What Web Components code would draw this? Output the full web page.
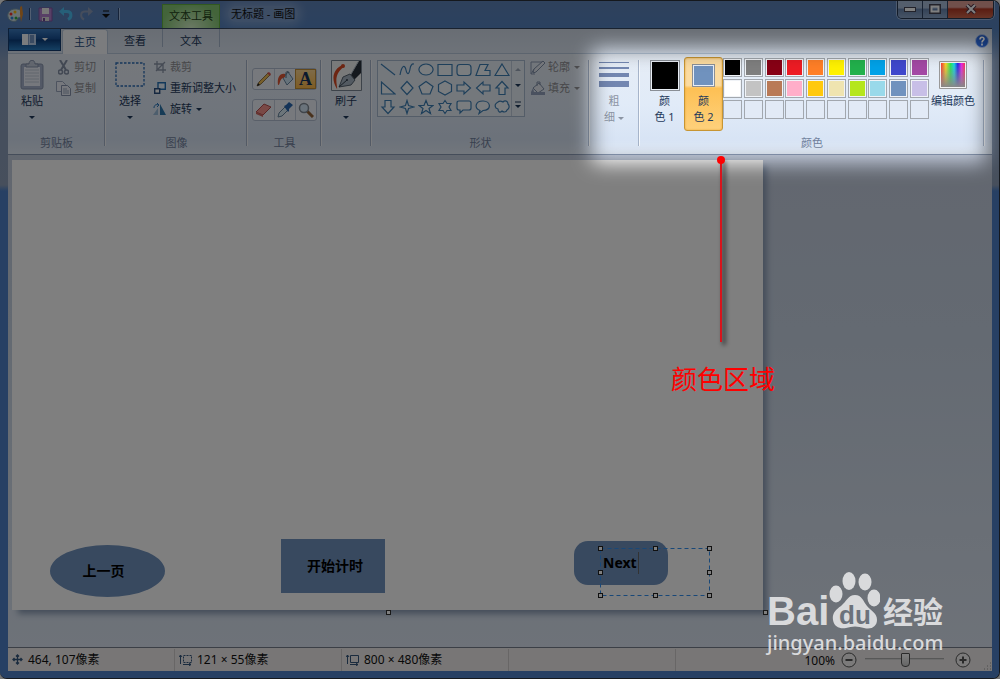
<!DOCTYPE html>
<html lang="zh-CN">
<head>
<meta charset="utf-8">
<meta name="viewport" content="width=device-width, initial-scale=1">
<title>无标题 - 画图</title>
<style>
html, body { margin: 0; background: #777; }
body { font: 11px/16px "Noto Sans", "Noto Sans CJK SC", sans-serif; color: #1e395b; }
</style>
</head>
<body>
<paint-app></paint-app>
<script>
const RESET = `
  *, *::before, *::after { box-sizing: border-box; }
  button, input { font: inherit; color: inherit; margin: 0; padding: 0; border: 0; background: none; }
  button { display: inline-flex; align-items: center; justify-content: center; }
`;
function define(name, css, html) {
  const t = document.createElement('template');
  customElements.define(name, class extends HTMLElement {
    connectedCallback() {
      if (this.shadowRoot) return;
      const root = this.attachShadow({ mode: 'open' });
      t.innerHTML = `<style>${RESET}${css}</style>${typeof html === 'function' ? html(this) : html}`;
      root.append(t.content.cloneNode(true));
    }
  });
}

/* Each icon: [width, height, svg body] */
const ICONS = {
  palette: [17, 17, `<path d="M8 3C3 3 0 7 1 11s5 5 8 4c2-1 1-2 2-3s4 0 4-4-3-5-7-5z" fill="#d4e3e6" stroke="#7c9aa8"/><circle cx="4" cy="8" r="1.5" fill="#e33"/><circle cx="8" cy="6" r="1.5" fill="#fb1"/><circle cx="5" cy="12" r="1.5" fill="#38d"/><circle cx="9" cy="12" r="1.5" fill="#3a4"/><path d="M13 1l2-1 1 8-2 8-1-8z" fill="#e08b2e"/>`],
  save: [15, 15, `<path d="M1 1h13v13H2l-1-1z" fill="#b07fcd" stroke="#7f55a0"/><path d="M4 1h7v6H4z" fill="#eee"/><path d="M4 10h7v4H4z" fill="#ddd"/><path d="M5 11h2v3H5z" fill="#714692"/>`],
  undo: [14, 14, `<path d="M3 4.500h5c5 0 5 6 1 8" fill="none" stroke="#4cc0f2" stroke-width="3"/><path d="M0 4.500L5 0v9z" fill="#4cc0f2"/>`],
  redo: [14, 14, `<path d="M11 4.500H6c-5 0-5 6-1 8" fill="none" stroke="#8a9ab8" stroke-width="2"/><path d="M14 4.500L9 0v9z" fill="#8a9ab8"/>`],
  qat: [8, 8, `<path d="M1 1h6" stroke="#111"/><path d="M0 4h8L4 8z" fill="#111"/>`],
  down: [6, 3, `<path d="M0 0h6L3 3z" fill="currentColor"/>`],
  up: [6, 3, `<path d="M0 3h6L3 0z" fill="currentColor"/>`],
  more: [8, 8, `<path d="M1 1h6" stroke="currentColor"/><path d="M1 4h6L4 7z" fill="currentColor"/>`],
  min: [12, 5, `<rect x=".5" y=".5" width="11" height="4" fill="#fff" stroke="#445"/>`],
  max: [12, 10, `<path d="M1 1h10v8H1z" fill="none" stroke="#445" stroke-width="2"/><path d="M2.500 2.500h7v5h-7z" fill="none" stroke="#fff" stroke-width="2"/>`],
  close: [12, 10, `<path d="M2 1l8 8M10 1L2 9" stroke="#534" stroke-width="4"/><path d="M2 1l8 8M10 1L2 9" stroke="#fff" stroke-width="2"/>`],
  help: [14, 14, `<circle cx="7" cy="7" r="6.500" fill="#2862ce" stroke="#a7bde6"/><path d="M5 5.500c0-3 4-3 4-.5C9 6.500 7 6.500 7 8.500M7 9.500v2" stroke="#fff" stroke-width="1.600" fill="none"/>`],
  menu: [14, 11, `<path d="M0 0h14v11H0z" fill="#f5f8fc"/><path d="M7 0h7v11H7z" fill="#bcd2ef"/><path d="M8 2h4M8 4h4M8 6h4M8 8h4" stroke="#285898"/><path d="M6.500 0v11" stroke="#8ba5cb"/>`],
  paste: [24, 30, `<rect x="1" y="4" width="22" height="25" rx="2" fill="#a6b3cc" stroke="#8793ad"/><path d="M4 7h16v19H4z" fill="#edf1fa"/><path d="M5 10h14M5 13h14M5 16h14M5 19h14M5 22h14" stroke="#c2cbdc"/><path d="M6 7V4h3c0-5 6-5 6 0h3v3z" fill="#c4cddd" stroke="#8793ad"/>`],
  cut: [11, 15, `<path d="M2 0l6 10M9 0L3 10" stroke="#8490a6" stroke-width="2" fill="none"/><circle cx="2.500" cy="12" r="2" fill="none" stroke="#8490a6" stroke-width="1.500"/><circle cx="8.500" cy="12" r="2" fill="none" stroke="#8490a6" stroke-width="1.500"/>`],
  copy: [15, 15, `<path d="M.5.5h6l3 3v7h-9z" fill="#edf1fa" stroke="#9aa7bf"/><path d="M5.500 4.500h6l3 3v7h-9z" fill="#edf1fa" stroke="#8793ad"/><path d="M7 8h4M7 10h6M7 12h6" stroke="#9aa7bf"/>`],
  select: [30, 26, `<rect x="1" y="1" width="28" height="23" fill="#fff" fill-opacity=".2" stroke="#2b6cb5" stroke-width="1.300" stroke-dasharray="2.500 1.500"/>`],
  crop: [12, 12, `<path d="M3 0v9h9M0 3h9v9M2 10l9-9" stroke="#8c97aa" stroke-width="1.300" fill="none"/>`],
  resize: [12, 12, `<path d="M4 .7h7.300v6.600H4z" fill="#eaf4ff" stroke="#2470b5" stroke-width="1.400"/><path d="M.7 6.700h5v4.600h-5z" fill="#fff" stroke="#2a4f80" stroke-width="1.400"/>`],
  rotate: [14, 13, `<path d="M0 12l5-7v7z" fill="#9bbddb"/><path d="M7 12V1l6 11z" fill="#2c77ad"/><path d="M1 5c0-3 2-4 5-3M4 0l2 2-2 2" stroke="#2875bb" fill="none"/>`],
  pencil: [16, 16, `<path d="M1 15l2-4 9-9 2 2-9 9z" fill="#efbc55" stroke="#8f764a"/><path d="M11 2l3 3 1-2-2-2z" fill="#db554c"/><path d="M1 15l1-3 2 2z" fill="#222"/>`],
  bucket: [17, 16, `<path d="M6 7l5-6 5 7-6 6z" fill="#cde4f4" stroke="#6785a1"/><path d="M9 7V2c0-2 3-2 3 0" fill="none" stroke="#596d82"/><path d="M8 3C3 2 0 6 1 14c3 0 0-6 7-8z" fill="#e15836"/>`],
  eraser: [17, 14, `<path d="M1 9l8-8 7 3-8 8z" fill="#f4938c" stroke="#b54f4f"/><path d="M1 9l7 3v2l-7-3z" fill="#ce6763"/>`],
  picker: [16, 16, `<path d="M1 15l1-4 6-6 3 3-6 6z" fill="#d9eaf4" stroke="#66839c"/><path d="M7 4l2-1 3-3 4 3-4 4v2l-1 1z" fill="#2867b0"/>`],
  zoom: [16, 16, `<path d="M9 9l6 6" stroke="#93643a" stroke-width="3"/><circle cx="6" cy="6" r="4.500" fill="#d4e7f6" stroke="#818a96" stroke-width="1.500"/>`],
  brush: [31, 31, `<path d="M.5.5h30v30H.5z" fill="#f2f4f5" stroke="#7b8794"/><path d="M12 5C3 8-1 18 6 29c1-3-5-14 7-22z" fill="#da4b25"/><circle cx="12" cy="6" r="2" fill="#da4b25"/><path d="M19 16L28 1h2v12l-7 7z" fill="#2b333c"/><path d="M27 2l-8 14" stroke="#adb8c3"/><path d="M8 27l4-10 7-3 5 6-4 5z" fill="#a7b5c2" stroke="#566370"/><path d="M8 27l8-7" stroke="#33404d"/><circle cx="16" cy="20" r="1" fill="#33404d"/>`],
  outline: [16, 15, `<path d="M1 2h11M1 2v12h4M1 14l3-5" stroke="#8b99b2" fill="none"/><path d="M3 13l1-4 9-8 2 2-9 9z" fill="#e8edf5" stroke="#8190a9"/>`],
  fill: [16, 15, `<path d="M3 7l6-5 5 6-6 4z" fill="#e8edf5" stroke="#8190a9"/><path d="M7 5V1h3v3" fill="none" stroke="#8190a9"/><path d="M1 11h14v3H1zM3 7l-2 4h3z" fill="#95a3bf"/>`],
  lines: [30, 28, `<path d="M0 1.500h30" stroke="#7387b1"/><path d="M0 7h30" stroke="#7387b1" stroke-width="2"/><path d="M0 14h30" stroke="#7387b1" stroke-width="4"/><path d="M0 23h30" stroke="#7387b1" stroke-width="6"/>`],
  move: [11, 11, `<path d="M5.500 1v9M1 5.500h9M4 2.500L5.500 1 7 2.500M4 8.500L5.500 10 7 8.500M2.500 4L1 5.500 2.500 7M8.500 4L10 5.500 8.500 7" stroke="#34567d" stroke-width="1.300" fill="none"/>`],
  selsize: [13, 12, `<path d="M4.500 1.500h8v7h-8z" fill="none" stroke="#34567d" stroke-dasharray="2 1"/><path d="M1.500 10V1M0 3l1.500-2L3 3M4 10.500h8M10 9l2 1.500-2 1.500" fill="none" stroke="#34567d"/>`],
  imgsize: [13, 12, `<path d="M4.500 1.500h8v7h-8z" fill="none" stroke="#34567d"/><path d="M1.500 10V1M0 3l1.500-2L3 3M4 10.500h8M10 9l2 1.500-2 1.500" fill="none" stroke="#34567d"/>`],
  minus: [16, 16, `<circle cx="8" cy="8" r="7" fill="#f6f5f5" stroke="#555"/><path d="M4.500 8h7" stroke="#555" stroke-width="2"/>`],
  plus: [16, 16, `<circle cx="8" cy="8" r="7" fill="#f6f5f5" stroke="#555"/><path d="M4.500 8h7M8 4.500v7" stroke="#555" stroke-width="2"/>`],
  grip: [9, 9, `<path d="M7 1h1M4 4h1M7 4h1M1 7h1M4 7h1M7 7h1" stroke="#999"/>`]
};
const SHAPES = [
  'M1 2l14 11', 'M1 13C3 2 6 3 7 8s3 5 4-1 3-5 4-5', 'M8 2a7 5.500 0 1 0 .01 0z', 'M1 2.500h14v11H1z', 'M4 2.500h8q3 0 3 3v5q0 3-3 3H4q-3 0-3-3v-5q0-3 3-3z', 'M5 2.500h8l-3 6h5v5H1z', 'M8 2l7 11.500H1z',
  'M1.500 2v12H15z', 'M8 1.500l6 6.500-6 6.500L2 8z', 'M8 1.500l7 5-3 7.500H4L1 6.500z', 'M8 1l6.500 3.500v7L8 15l-6.500-3.500v-7z', 'M1 5h7V2l6.500 6L8 14v-3H1z', 'M15 5H8V2L1.500 8 8 14v-3h7z', 'M5 14.500V8H2l6-6.500L14 8h-3v6.500z',
  'M5 1.500V8H2l6 6.500L14 8h-3V1.500z', 'M8 1.500l1.500 5L14.500 8l-5 1.500L8 14.500l-1.500-5L1.500 8l5-1.500z', 'M8 1.500l2 5h5l-4 3 1.500 5L8 11.500 3.500 14.500 5 9.500l-4-3h5z', 'M8 1.500l2 3h4l-2 3.500 2 3.500h-4l-2 3-2-3H2L4 8 2 4.500h4z', 'M3 2h10q2 0 2 2v5q0 2-2 2H7l-3 3v-3H3q-2 0-2-2V4q0-2 2-2z', 'M5 11.500C-1 9 0 2 8 2s9 9 0 9.500L4 14.500z', 'M4 3c2-2 3-1 5 0 2-2 5-1 5 2 2 2 1 5-1 6-1 3-4 2-5 1-2 2-4 1-4-2l-2-1c-2-3 0-5 2-6z'
];
ICONS.rainbow = [28, 28, `<defs><linearGradient id="h"><stop offset="0" stop-color="#f33"/><stop offset=".2" stop-color="#fd2"/><stop offset=".4" stop-color="#2e5"/><stop offset=".55" stop-color="#1de"/><stop offset=".7" stop-color="#22e"/><stop offset=".85" stop-color="#e2e"/><stop offset="1" stop-color="#f35"/></linearGradient><linearGradient id="v" x2="0" y2="1"><stop offset="0" stop-color="#888" stop-opacity="0"/><stop offset="1" stop-color="#888"/></linearGradient></defs><path d="M.5.5h27v27H.5z" fill="#f5f5f5" stroke="#999"/><path d="M2 2h24v24H2z" fill="url(#h)"/><path d="M2 2h24v24H2z" fill="url(#v)"/>`];

define('ui-icon', `:host { display: inline-flex; flex: none; } svg { display: block; }`, el => {
  const n = el.getAttribute('name');
  const [w, h, body] = ICONS[n];
  return `<svg width="${w}" height="${h}" viewBox="0 0 ${w} ${h}" aria-hidden="true">${body}</svg>`;
});

define('title-bar', `
  :host { display: flex; height: 28px; position: relative; align-items: center; color: #111; }
  .quick { display: flex; align-items: center; gap: 5px; width: 155px; margin-left: -1px; }
  .quick button { width: 15px; height: 16px; }
  .quick button:first-of-type { margin-left: 3px; }
  i { width: 1px; height: 12px; background: #2c4772; box-shadow: 1px 0 #a5bfe5; }
  .context { width: 58px; align-self: stretch; margin-top: 4px; display: grid; place-items: center; padding-bottom: 2px; background: radial-gradient(ellipse at 50% 100%, #d5f2c8, #86c875 75%); border: 1px solid #65b341; border-bottom: 0; color: #24421a; }
  h1 { font-size: 11px; line-height: 16px; font-weight: 400; margin: 0 auto 0 8px; padding: 0 3px; border-radius: 8px; background: #fff3; box-shadow: 0 0 8px 4px #fff3; }
  .win { display: flex; align-self: flex-start; height: 19px; margin-right: -2px; border: 1px solid #263852; border-top: 0; border-radius: 0 0 5px 5px; overflow: hidden; box-shadow: 0 0 0 1px #9ab5dd; }
  .win button { width: 25px; background: linear-gradient(#a8bcd8 45%, #6884ae 50%, #8ea8cc); border-right: 1px solid #304565; }
  .win button:last-child { width: 45px; border: 0; background: linear-gradient(#e2a097 40%, #b43a25 50%, #d0694e); }
`, `
  <div class="quick"><ui-icon name="palette"></ui-icon><i></i>
    <button aria-label="保存"><ui-icon name="save"></ui-icon></button>
    <button aria-label="撤消"><ui-icon name="undo"></ui-icon></button>
    <button aria-label="重做"><ui-icon name="redo"></ui-icon></button>
    <button aria-label="自定义快速访问工具栏"><ui-icon name="qat"></ui-icon></button><i></i></div>
  <div class="context">文本工具</div>
  <h1>无标题 - 画图</h1>
  <div class="win"><button aria-label="最小化"><ui-icon name="min"></ui-icon></button><button aria-label="最大化"><ui-icon name="max"></ui-icon></button><button aria-label="关闭"><ui-icon name="close"></ui-icon></button></div>
`);

define('tab-strip', `
  :host { display: flex; box-sizing: border-box; height: 26px; background: linear-gradient(#d2dbe8, #dce6f3); border-top: 1px solid #35455f; border-bottom: 1px solid #b8c8dc; padding-right: 1px; }
  button { height: 24px; }
  .app { width: 53px; height: 22px; gap: 6px; color: #fff; background: linear-gradient(#3c7cc2, #164e93 48%, #0b3d7c 52%, #2a7fc5); border: 1px solid #153d70; border-top: 0; }
  .tab { width: 46px; }
  .on { background: #f7f9fd; border: 1px solid #b8c8dc; border-bottom: 0; border-radius: 3px 3px 0 0; margin: 0 4px 0 1px; height: 25px; color: #1e4a80; }
  .ctx { width: 58px; margin-left: 4px; height: 18px; padding-top: 6px; border: 1px solid #a7b6cc; border-width: 0 1px; }
  .help { margin-left: auto; width: 18px; }
`, `
  <button class="app" aria-label="画图菜单"><ui-icon name="menu"></ui-icon><ui-icon name="down"></ui-icon></button>
  <button class="tab on">主页</button><button class="tab">查看</button><button class="tab ctx">文本</button>
  <button class="help" aria-label="帮助"><ui-icon name="help"></ui-icon></button>
`);

define('ribbon-group', `
  :host { display: flex; flex-direction: column; position: relative; flex: none; }
  :host::after { content: ""; position: absolute; right: 0; top: 6px; bottom: 8px; width: 2px; background: linear-gradient(90deg, #a6b4ca 50%, #f6f9fd 50%); }
  .body { display: flex; height: 79px; padding-top: 3px; align-items: flex-start; }
  .label { height: 22px; line-height: 22px; text-align: center; color: #71819d; padding-right: 1px; }
`, el => `<div class="body"><slot></slot></div><div class="label">${el.getAttribute('label') || ''}</div>`);

define('big-button', `
  :host { display: block; flex: none; }
  button { width: 100%; flex-direction: column; justify-content: flex-start; height: 74px; padding-top: 1px; border: 1px solid transparent; border-radius: 3px; text-align: center; }
  .icon { height: 32px; display: grid; place-items: center; }
  .text { margin-top: 2px; white-space: nowrap; }
  ui-icon[name=down] { margin-top: 7px; }
  :host([disabled]) { color: #8b94a3; }
  :host([selected]) button { border-color: #c79533; background: linear-gradient(#fbdba0 38%, #fdc054 42%, #fed17c); box-shadow: inset 0 0 2px #e3a02f; }
`, el => `<button ${el.hasAttribute('disabled') ? 'disabled' : ''}><span class="icon"><slot name="icon"></slot></span><span class="text"><slot></slot></span>${el.hasAttribute('menu') ? '<ui-icon name="down"></ui-icon>' : ''}</button>`);

define('small-button', `
  :host { display: block; height: 20px; }
  button { height: 20px; gap: 3px; white-space: nowrap; }
  .icon { width: 15px; display: grid; place-items: center; }
  :host([disabled]) { color: #8f8f93; }
  ui-icon[name=down] { margin-left: 1px; }
`, el => `<button ${el.hasAttribute('disabled') ? 'disabled' : ''}><span class="icon"><ui-icon name="${el.getAttribute('icon')}"></ui-icon></span><slot></slot>${el.hasAttribute('menu') ? '<ui-icon name="down"></ui-icon>' : ''}</button>`);

define('tool-box', `
  :host { display: grid; gap: 9px; margin: 11px 0 0 4px; }
  div { display: flex; border: 1px solid #b3bfd2; border-radius: 3px; background: #eef3fa; }
  button { width: 21px; height: 20px; border-left: 1px solid #c3cddc; }
  button:first-child { border-left: 0; }
  .on { border: 1px solid #c59036; background: linear-gradient(#fcd690, #fdb94a); font: bold 18px/18px "Liberation Serif", serif; color: #15325c; }
`, `
  <div><button aria-label="铅笔"><ui-icon name="pencil"></ui-icon></button><button aria-label="填充"><ui-icon name="bucket"></ui-icon></button><button class="on">A</button></div>
  <div><button aria-label="橡皮擦"><ui-icon name="eraser"></ui-icon></button><button aria-label="取色器"><ui-icon name="picker"></ui-icon></button><button aria-label="放大镜"><ui-icon name="zoom"></ui-icon></button></div>
`);

define('shape-gallery', `
  :host { display: flex; box-sizing: border-box; width: 148px; height: 57px; margin: 3px 0 0 5px; border: 1px solid #a9bad0; background: #e9f0f9; }
  .grid { flex: 1; display: grid; grid-template: repeat(3, 1fr) / repeat(7, 1fr); }
  svg { fill: #f5faff; stroke: #3d7fb5; stroke-width: 1.200; }
  .bar { width: 13px; display: grid; border-left: 1px solid #c0ccdd; }
  .bar button:first-child { color: #9da9ba; }
`, `<div class="grid">${SHAPES.map((d, i) => `<button aria-label="形状 ${i + 1}"><svg width="16" height="16" viewBox="0 0 16 16"><path d="${d}" ${i < 2 ? 'fill="none"' : ''}/></svg></button>`).join('')}</div>
  <div class="bar"><button aria-label="上一行"><ui-icon name="up"></ui-icon></button><button aria-label="下一行"><ui-icon name="down"></ui-icon></button><button aria-label="更多形状"><ui-icon name="more"></ui-icon></button></div>`);

define('color-chip', `
  :host { display: block; box-sizing: border-box; width: 30px; height: 31px; padding: 1px; border: 1px solid #8a8f96; background: #e9eef5; }
  :host([small]) { width: 23px; height: 23px; }
  div { height: 100%; }
`, el => `<div style="background:${el.getAttribute('color')}"></div>`);

const COLORS = ['#000', '#7f7f7f', '#880015', '#ed1c24', '#ff7f27', '#fff200', '#22b14c', '#00a2e8', '#3f48cc', '#a349a4',
  '#fff', '#c3c3c3', '#b97a57', '#ffaec9', '#ffc90e', '#efe4b0', '#b5e61d', '#99d9ea', '#7092be', '#c8bfe7',
  ...Array(10).fill('')];
define('color-palette', `
  :host { display: grid; grid-template-columns: repeat(10, 19px); justify-content: space-between; row-gap: 2px; width: 206px; margin: 1px 0 0; flex: none; }
  button { height: 19px; border: 1px solid #a2a7ae; padding: 1px; background: #f0f3f7; }
  button.empty { background: #e2eaf6; }
  span { width: 100%; height: 100%; }
`, COLORS.map((c, i) => `<button class="${c ? '' : 'empty'}" aria-label="颜色 ${c || i + 1}"><span style="background:${c || 'none'}"></span></button>`).join(''));

define('tool-ribbon', `
  :host { display: flex; box-sizing: border-box; height: 101px; background: linear-gradient(#e6edf6, #e1ebf8 50%, #d8e4f5 85%, #e4edf9); border-bottom: 1px solid #8b9bb5; }
  .list { display: grid; gap: 1px; margin-left: -1px; }
  .clip { width: 98px; } .img { width: 142px; } .tool { width: 74px; } .brush { width: 50px; } .shape { width: 218px; } .size { width: 50px; } .color { flex: 1; margin-right: 7px; }
  .w50 { width: 50px; } .w48 { width: 48px; } .w39 { width: 39px; }
  .brush .w50, .size .w50, .clip .w50 { margin-left: -1px; }
  .img .list { margin-left: -2px; } .shape .list { margin-left: 5px; }
  .color .w39:first-child { margin-left: 5px; }
  ui-icon[name=down] { vertical-align: middle; }
`, `
  <ribbon-group class="clip" label="剪贴板"><big-button class="w50" menu><ui-icon slot="icon" name="paste"></ui-icon>粘贴</big-button>
    <div class="list"><small-button icon="cut" disabled>剪切</small-button><small-button icon="copy" disabled>复制</small-button></div></ribbon-group>
  <ribbon-group class="img" label="图像"><big-button class="w48" menu><ui-icon slot="icon" name="select"></ui-icon>选择</big-button>
    <div class="list"><small-button icon="crop" disabled>裁剪</small-button><small-button icon="resize">重新调整大小</small-button><small-button icon="rotate" menu>旋转</small-button></div></ribbon-group>
  <ribbon-group class="tool" label="工具"><tool-box></tool-box></ribbon-group>
  <ribbon-group class="brush"><big-button class="w50" menu><ui-icon slot="icon" name="brush"></ui-icon>刷子</big-button></ribbon-group>
  <ribbon-group class="shape" label="形状"><shape-gallery></shape-gallery>
    <div class="list"><small-button icon="outline" disabled menu>轮廓</small-button><small-button icon="fill" disabled menu>填充</small-button></div></ribbon-group>
  <ribbon-group class="size"><big-button class="w50" disabled><ui-icon slot="icon" name="lines"></ui-icon>粗<br>细 <ui-icon name="down"></ui-icon></big-button></ribbon-group>
  <ribbon-group class="color" label="颜色"><big-button class="w39"><color-chip slot="icon" color="#000"></color-chip>颜<br>色 1</big-button>
    <big-button class="w39" selected><color-chip slot="icon" small color="#7092be"></color-chip>颜<br>色 2</big-button>
    <color-palette></color-palette>
    <big-button class="w48"><ui-icon slot="icon" name="rainbow"></ui-icon>编辑颜色</big-button></ribbon-group>
`);

/* Objects on the free drawing surface keep their own coordinates. */
define('paint-canvas', `
  :host { display: block; flex: 1; padding: 5px 4px 37px; background: linear-gradient(#c5cedf, #c8d4e4 35%, #dce5f2); }
  .sheet { position: relative; width: 751px; height: 450px; background: #fff; box-shadow: 5px 5px 6px -1px #8b9cb5; color: #000; }
  .shape { position: absolute; background: #7092be; }
  .ellipse { left: 38px; top: 385px; width: 115px; height: 52px; border-radius: 50%; }
  .rect { left: 269px; top: 379px; width: 104px; height: 54px; }
  .round { left: 562px; top: 381px; width: 94px; height: 44px; border-radius: 14px; }
  .shape, input { font: bold 14px/20px "Noto Sans", "Noto Sans CJK SC", sans-serif; }
  .shape { display: grid; place-items: center; }
  .ellipse { padding-right: 8px; } .rect { padding-left: 4px; }
  .text { position: absolute; left: 588px; top: 388px; width: 110px; height: 48px; }
  svg { position: absolute; inset: 0; overflow: visible; }
  input { position: absolute; left: 3px; top: 5px; width: 100px; height: 20px; }
  .caret { position: absolute; left: 38px; top: 4px; width: 1px; height: 22px; background: #666; }
  .h { position: absolute; width: 5px; height: 5px; border: 1px solid #333; background: #fff; }
`, `
  <div class="sheet">
    <div class="shape ellipse">上一页</div><div class="shape rect">开始计时</div><div class="shape round"></div>
    <div class="text"><svg width="110" height="48"><rect x=".5" y=".5" width="109" height="47" fill="none" stroke="#3290f0" stroke-dasharray="4 3"/>
      <g fill="#fff" stroke="#222">${[[0, 0], [55, 0], [109, 0], [0, 24], [109, 24], [0, 47], [55, 47], [109, 47]].map(([x, y]) => `<rect x="${x - 1.5}" y="${y - 1.5}" width="4" height="4"/>`).join('')}</g></svg>
      <input value="Next" aria-label="文本"><span class="caret"></span></div>
    <span class="h" style="left:374px;top:450px"></span><span class="h" style="left:751px;top:450px"></span>
  </div>
`);

define('status-bar', `
  :host { display: flex; align-items: center; box-sizing: border-box; height: 24px; font-size: 12px; color: #111; background: #f0ecec; border-top: 1px solid #777f8c; }
  div { display: flex; align-items: center; gap: 5px; width: 167px; height: 22px; padding-left: 4px; border-right: 1px solid #d0cccc; }
  .zoom { width: auto; flex: 1; border: 0; justify-content: flex-end; gap: 6px; padding-left: 0; }
  input { appearance: none; width: 79px; height: 16px; margin: 0 5px 0 2px; background: linear-gradient(#999, #eee) center 6px / 100% 2px no-repeat; }
  input::-webkit-slider-thumb { appearance: none; box-sizing: border-box; width: 9px; height: 14px; border: 1px solid #555; border-radius: 1px 1px 4px 4px; background: linear-gradient(#fff, #ccc); }
  .grip { align-self: flex-end; margin-left: 6px; }
  .value { line-height: 12px; padding-top: 2px; }
`, `
  <div><ui-icon name="move"></ui-icon>464, 107像素</div><div><ui-icon name="selsize"></ui-icon>121 × 55像素</div><div><ui-icon name="imgsize"></ui-icon>800 × 480像素</div><div></div>
  <div class="zoom"><span class="value">100%</span><button aria-label="缩小"><ui-icon name="minus"></ui-icon></button><input type="range" aria-label="缩放" value="52"><button aria-label="放大"><ui-icon name="plus"></ui-icon></button><ui-icon class="grip" name="grip"></ui-icon></div>
`);

/* Dark veil with a soft opening above the colour group. */
define('spot-light', `
  :host { position: absolute; inset: 0; overflow: hidden; pointer-events: none; }
  .hole { position: absolute; left: 592px; right: 13px; top: 48px; height: 114px; border-radius: 6px; box-shadow: 0 0 0 1200px rgba(0, 0, 0, .5); filter: blur(10px); }
  .pin { position: absolute; left: 720px; top: 159px; width: 2px; height: 182px; background: #d8141c; box-shadow: 3px 2px 4px 1px #0007; }
  .pin::before { content: ""; position: absolute; left: -3px; top: -4px; width: 8px; height: 8px; border-radius: 50%; background: #f00; }
  p { position: absolute; left: 671px; top: 361px; margin: 0; font-size: 26px; line-height: 34px; font-weight: 400; color: #f00; }
`, `<div class="hole"></div><div class="pin"></div><p>颜色区域</p>`);

define('brand-mark', `
  :host { position: absolute; right: 54px; bottom: 25px; width: 178px; color: #d9dadc; pointer-events: none; }
  .row { display: flex; align-items: flex-end; height: 62px; }
  b { font: bold 40px/38px "Liberation Sans", sans-serif; width: 61px; margin-bottom: 3px; }
  .cn { font: bold 30px/30px "Noto Sans CJK SC", sans-serif; margin: 0 0 8px 3px; white-space: nowrap; }
  svg { flex: none; margin-bottom: 4px; }
  text { font: bold 26px "Liberation Sans", sans-serif; fill: #6c727b; }
  .url { font-size: 20px; line-height: 20px; white-space: nowrap; font-weight: 500; }
`, `
  <div class="row"><b>Bai</b><svg width="52" height="58" viewBox="0 0 52 58"><g fill="currentColor"><ellipse cx="8" cy="23" rx="6.500" ry="8.500"/><ellipse cx="21" cy="10" rx="6.500" ry="9"/><ellipse cx="37" cy="11" rx="6.500" ry="8.500"/><ellipse cx="46" cy="27" rx="6.500" ry="8.500"/><path d="M27 24c-7 0-8 6-14 11-6 4-9 8-8 14 1 7 7 9 13 8 6-2 12-2 18 0 8 2 13-2 13-8 0-7-6-9-10-14s-5-11-12-11z"/></g><text x="27" y="53" text-anchor="middle">du</text></svg><span class="cn">经验</span></div>
  <div class="url">jingyan.baidu.com</div>
`);

define('paint-app', `
  :host { display: flex; flex-direction: column; position: relative; min-height: 100vh; padding: 0 7px 7px 8px; border-radius: 7px; overflow: hidden; border: solid #15181d; border-width: 1px 1px 1px 0; background: linear-gradient(#5e82b8, #5683c0 28px, #8a9fbe 60px, #8e9fb9 184px, #4e81c9 190px); box-sizing: border-box; }
  title-bar { margin-top: -1px; }
`, `
  <title-bar></title-bar><tab-strip></tab-strip><tool-ribbon></tool-ribbon><paint-canvas></paint-canvas><status-bar></status-bar>
  <spot-light></spot-light><brand-mark></brand-mark>
`);
</script>
</body>
</html>
